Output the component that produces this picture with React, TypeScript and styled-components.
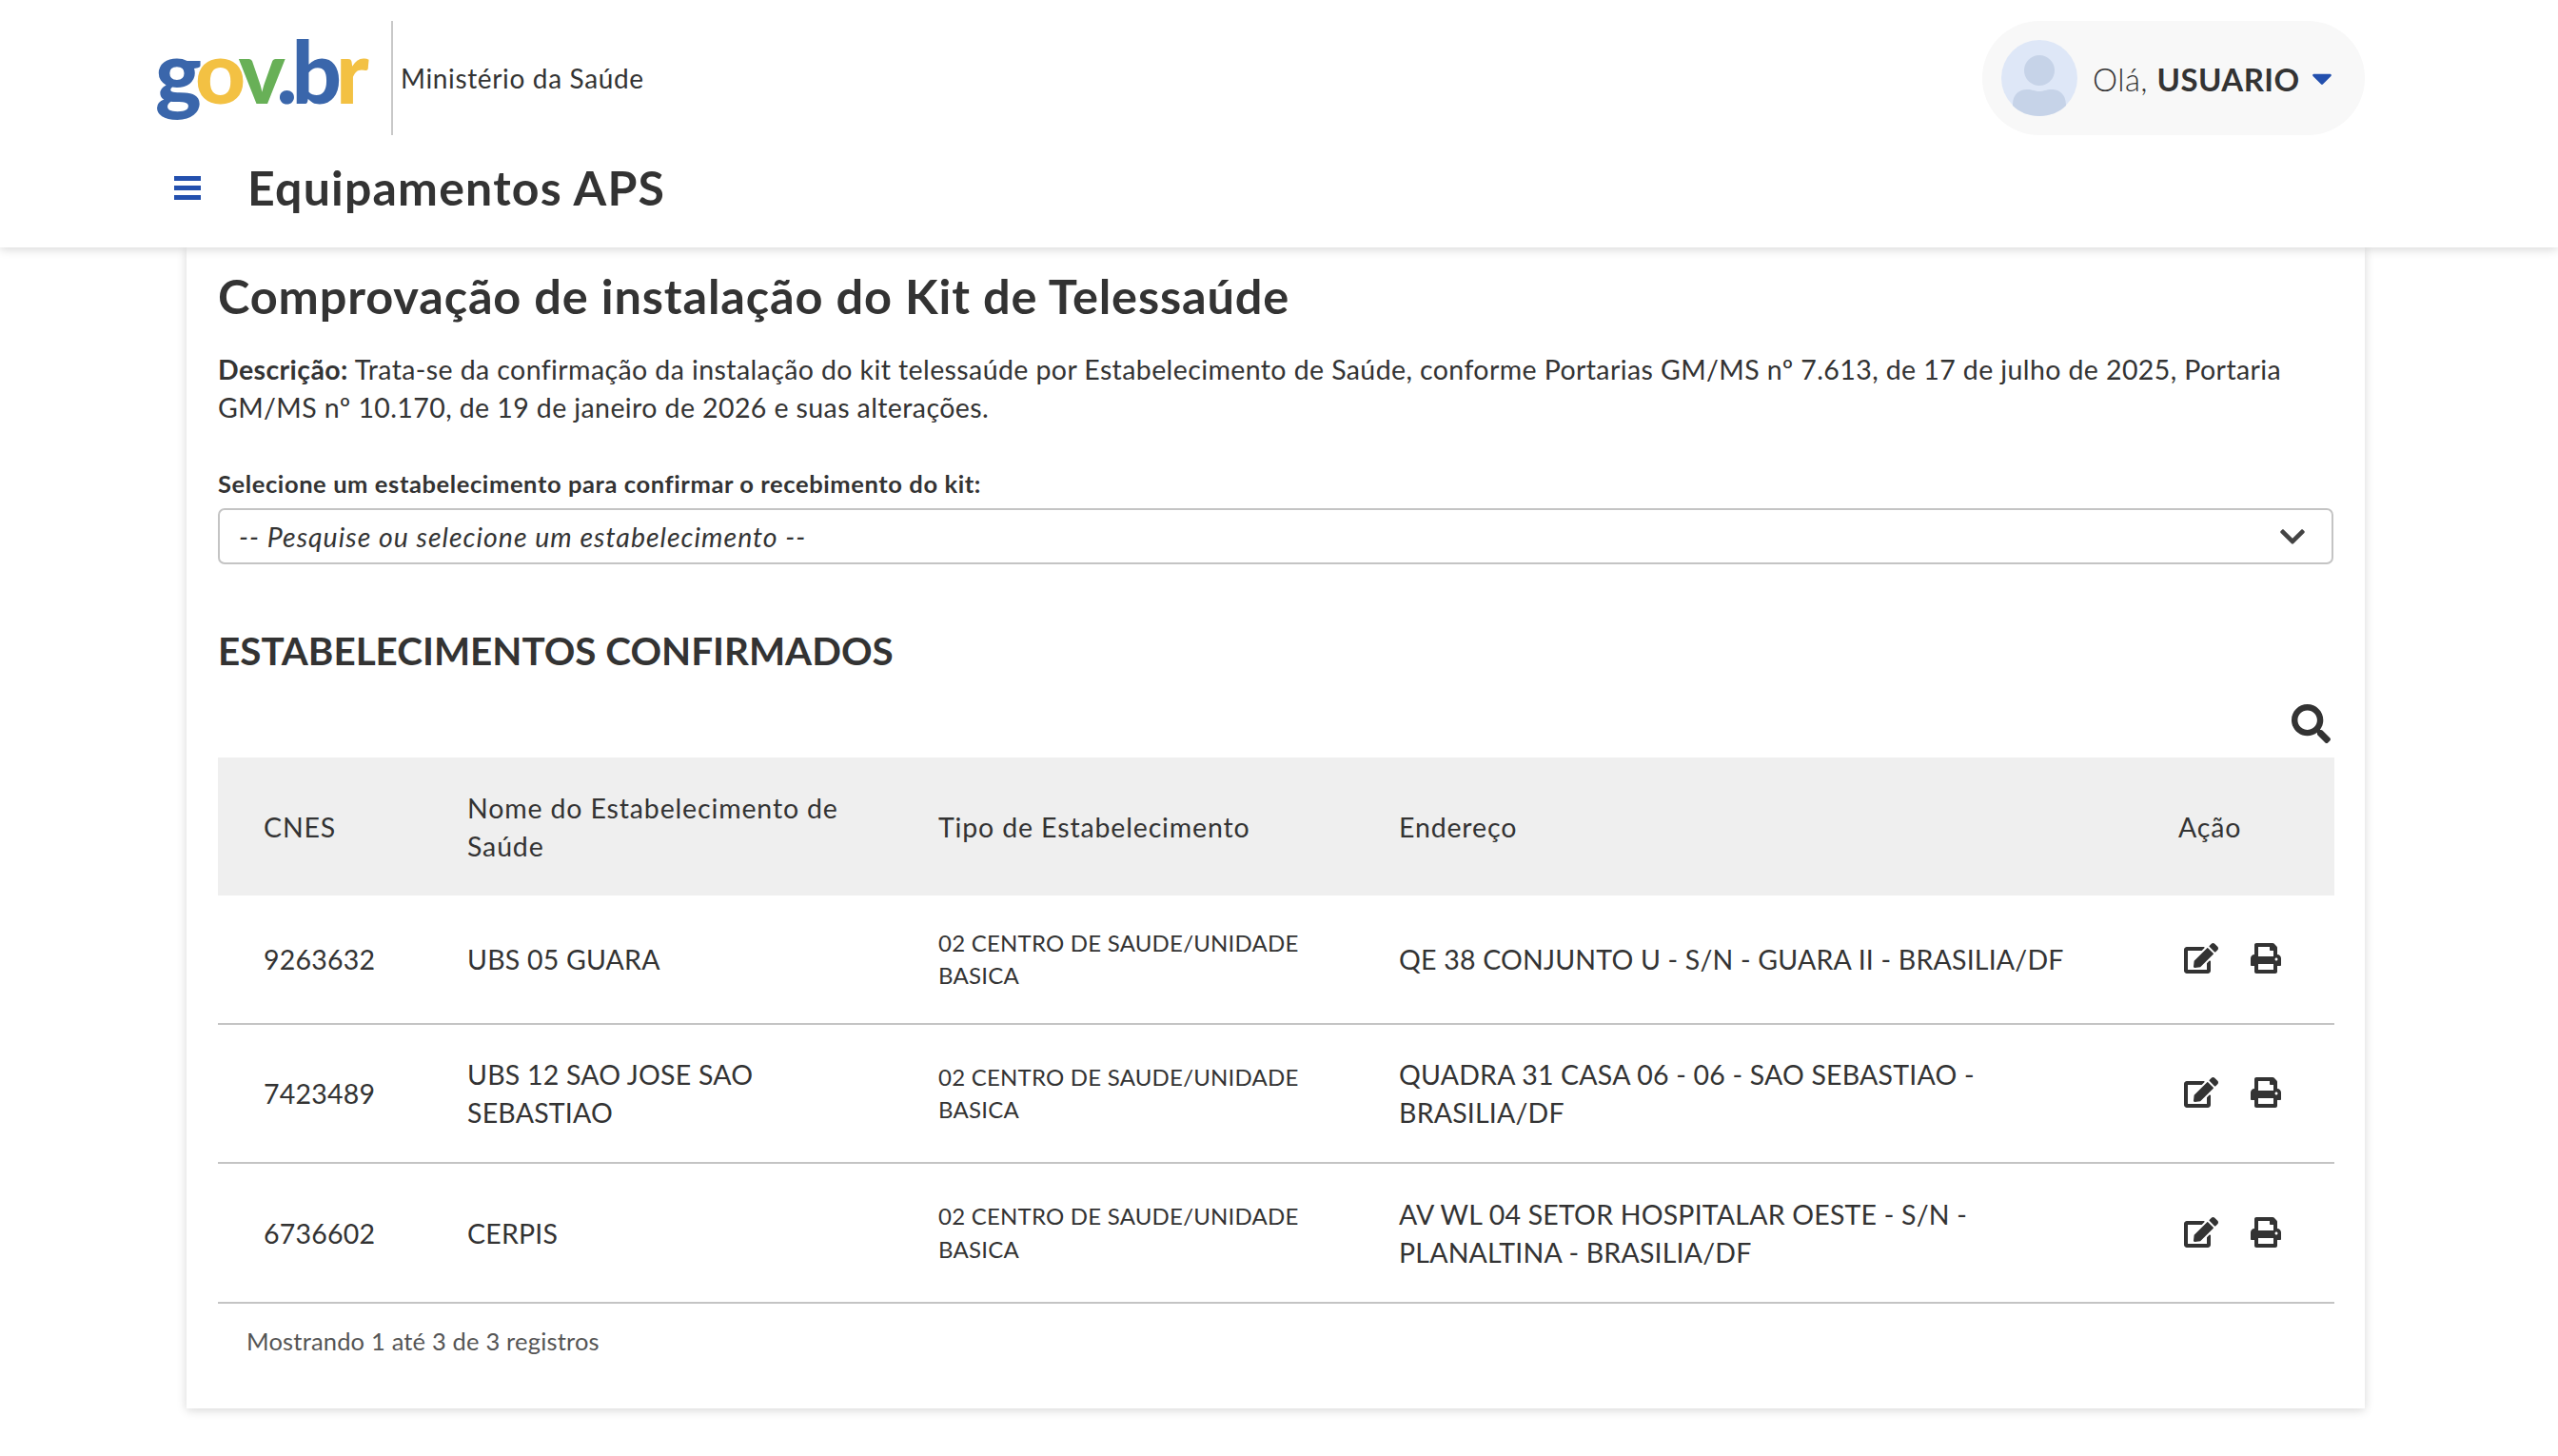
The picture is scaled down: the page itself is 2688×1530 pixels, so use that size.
import { FC } from "react";
import styled, { createGlobalStyle } from "styled-components";
import { FaEdit, FaPrint, FaSearch, FaChevronDown, FaCaretDown } from "react-icons/fa";

const rows = [
  {
    cnes: "9263632",
    nome: "UBS 05 GUARA",
    tipo: "02 CENTRO DE SAUDE/UNIDADE BASICA",
    endereco: "QE 38 CONJUNTO U - S/N - GUARA II - BRASILIA/DF",
    height: 135,
  },
  {
    cnes: "7423489",
    nome: "UBS 12 SAO JOSE SAO SEBASTIAO",
    tipo: "02 CENTRO DE SAUDE/UNIDADE BASICA",
    endereco: "QUADRA 31 CASA 06 - 06 - SAO SEBASTIAO - BRASILIA/DF",
    height: 146,
  },
  {
    cnes: "6736602",
    nome: "CERPIS",
    tipo: "02 CENTRO DE SAUDE/UNIDADE BASICA",
    endereco: "AV WL 04 SETOR HOSPITALAR OESTE - S/N - PLANALTINA - BRASILIA/DF",
    height: 147,
  },
];

const App: FC = () => {
  return (
    <>
      <GlobalStyle />
      <Header>
        <BrandRow>
          <Brand>
            <Logo>
              <LogoLetter $color="#3a66ab">g</LogoLetter>
              <LogoLetter $color="#f3c143">o</LogoLetter>
              <LogoLetter $color="#68b057">v</LogoLetter>
              <LogoLetter $color="#3a66ab">.b</LogoLetter>
              <LogoLetter $color="#f3c143">r</LogoLetter>
            </Logo>
            <BrandDivider />
            <BrandName>Ministério da Saúde</BrandName>
          </Brand>
          <UserPill>
            <Avatar viewBox="0 0 80 80">
              <circle cx="40" cy="40" r="40" fill="#dee7f7" />
              <circle cx="40" cy="32" r="16" fill="#c6d3e8" />
              <path
                d="M12 69 L12 68 C12 56 20 52 27 52 C33 52 35 54 40 54 C45 54 47 52 53 52 C60 52 68 56 68 69 C61 76 51 80 40 80 C29 80 19 76 12 69 Z"
                fill="#c6d3e8"
              />
            </Avatar>
            <UserName>
              Olá, <strong>USUARIO</strong>
            </UserName>
            <UserCaret />
          </UserPill>
        </BrandRow>
        <TitleRow>
          <MenuButton>
            <MenuBar />
            <MenuBar />
            <MenuBar />
          </MenuButton>
          <AppTitle>Equipamentos APS</AppTitle>
        </TitleRow>
      </Header>

      <Card>
        <PageTitle>Comprovação de instalação do Kit de Telessaúde</PageTitle>
        <Description>
          <strong>Descrição:</strong> Trata-se da confirmação da instalação do kit telessaúde por
          Estabelecimento de Saúde, conforme Portarias GM/MS nº 7.613, de 17 de julho de 2025,
          Portaria GM/MS nº 10.170, de 19 de janeiro de 2026 e suas alterações.
        </Description>
        <FieldLabel>Selecione um estabelecimento para confirmar o recebimento do kit:</FieldLabel>
        <SelectBox>
          <Placeholder>-- Pesquise ou selecione um estabelecimento --</Placeholder>
          <FaChevronDown />
        </SelectBox>
        <SectionTitle>ESTABELECIMENTOS CONFIRMADOS</SectionTitle>
        <SearchRow>
          <FaSearch />
        </SearchRow>
        <Table>
          <colgroup>
            <col width={262} />
            <col width={495} />
            <col width={484} />
            <col width={819} />
            <col width={164} />
          </colgroup>
          <thead>
            <tr>
              <HeadCell>CNES</HeadCell>
              <HeadCell>Nome do Estabelecimento de Saúde</HeadCell>
              <HeadCell>Tipo de Estabelecimento</HeadCell>
              <HeadCell>Endereço</HeadCell>
              <HeadCell>Ação</HeadCell>
            </tr>
          </thead>
          <tbody>
            {rows.map((row) => (
              <BodyRow key={row.cnes} $height={row.height}>
                <Cell>{row.cnes}</Cell>
                <Cell>{row.nome}</Cell>
                <SmallCell>{row.tipo}</SmallCell>
                <Cell>{row.endereco}</Cell>
                <ActionCell>
                  <Actions>
                    <EditIcon />
                    <PrintIcon />
                  </Actions>
                </ActionCell>
              </BodyRow>
            ))}
          </tbody>
        </Table>
        <TableInfo>Mostrando 1 até 3 de 3 registros</TableInfo>
      </Card>
    </>
  );
};

export default App;

const GlobalStyle = createGlobalStyle`
  html, body {
    margin: 0;
    padding: 0;
    background: #ffffff;
  }

  body {
    font-family: "Lato", "Open Sans", sans-serif;
    color: #333333;
    font-size: 28.5px;
    height: 1530px;
    overflow: hidden;
  }
`;

const Header = styled.header`
  position: relative;
  z-index: 2;
  height: 260px;
  box-sizing: border-box;
  padding: 22px 203px 0 163px;
  background: #ffffff;
  box-shadow: 0 2px 10px rgba(0, 0, 0, 0.16);
`;

const BrandRow = styled.div`
  display: flex;
  align-items: center;
  justify-content: space-between;
  height: 120px;
`;

const Brand = styled.div`
  display: flex;
  align-items: center;
`;

const Logo = styled.div`
  width: 248px;
  font-family: "Lato", sans-serif;
  font-size: 92px;
  font-weight: 900;
  letter-spacing: -6px;
  line-height: 120px;
  position: relative;
  top: -8px;
`;

const LogoLetter = styled.span<{ $color: string }>`
  color: ${(p) => p.$color};
`;

const BrandDivider = styled.div`
  width: 2px;
  height: 120px;
  background: #c8c8c8;
`;

const BrandName = styled.span`
  margin-left: 8px;
  font-size: 28px;
  letter-spacing: 0.65px;
`;

const UserPill = styled.div`
  display: flex;
  align-items: center;
  box-sizing: border-box;
  width: 402px;
  height: 120px;
  padding: 0 20px;
  border-radius: 60px;
  background: #f8f8f8;
`;

const Avatar = styled.svg`
  width: 80px;
  height: 80px;
  flex-shrink: 0;
`;

const UserName = styled.span`
  margin-left: 16px;
  font-size: 33px;
  font-weight: 300;
  letter-spacing: 0.45px;
  white-space: nowrap;
  position: relative;
  top: 1px;

  strong {
    font-weight: 700;
  }
`;

const UserCaret = styled(FaCaretDown)`
  margin-left: auto;
  margin-right: 14px;
  width: 22px;
  height: 34px;
  color: #2350ae;
`;

const TitleRow = styled.div`
  display: flex;
  align-items: center;
  height: 110px;
  padding-left: 20px;
`;

const MenuButton = styled.div`
  display: flex;
  flex-direction: column;
  gap: 5px;
  width: 28px;
`;

const MenuBar = styled.span`
  height: 5px;
  background: #2350ae;
`;

const AppTitle = styled.h1`
  margin: 0 0 0 49px;
  font-size: 50px;
  font-weight: 700;
  letter-spacing: 1.2px;
  line-height: 60px;
  color: #333333;
`;

const Card = styled.main`
  box-sizing: border-box;
  width: 2289px;
  height: 1220px;
  margin-left: 196px;
  padding: 21px 33px 0;
  background: #ffffff;
  box-shadow: 0 2px 10px rgba(0, 0, 0, 0.16);
`;

const PageTitle = styled.h2`
  margin: 0;
  font-size: 50.5px;
  font-weight: 700;
  letter-spacing: 0.85px;
  line-height: 60px;
  color: #333333;
`;

const Description = styled.p`
  margin: 27px 0 0;
  font-size: 28.5px;
  letter-spacing: 0.4px;
  line-height: 40px;
  font-weight: 400;

  strong {
    font-weight: 700;
  }
`;

const FieldLabel = styled.label`
  display: block;
  margin-top: 40px;
  font-size: 25.5px;
  font-weight: 700;
  letter-spacing: 0.6px;
  line-height: 40px;
`;

const SelectBox = styled.div`
  display: flex;
  align-items: center;
  justify-content: space-between;
  box-sizing: border-box;
  height: 59px;
  margin-top: 6px;
  padding: 0 26px 0 20px;
  border: 2px solid #c4c4c4;
  border-radius: 7px;

  svg {
    width: 30px;
    height: 30px;
    color: #444444;
  }
`;

const Placeholder = styled.span`
  font-size: 28.5px;
  font-style: italic;
  font-weight: 400;
  letter-spacing: 1px;
`;

const SectionTitle = styled.h3`
  margin: 61px 0 0;
  font-size: 40.4px;
  font-weight: 700;
  line-height: 60px;
  color: #333333;
`;

const SearchRow = styled.div`
  display: flex;
  justify-content: flex-end;
  height: 82px;
  padding: 26px 3px 0 0;
  box-sizing: border-box;

  svg {
    width: 41px;
    height: 41px;
    color: #333333;
  }
`;

const Table = styled.table`
  width: 2224px;
  table-layout: fixed;
  border-collapse: collapse;
`;

const HeadCell = styled.th`
  height: 145px;
  padding: 0 80px 0 48px;
  box-sizing: border-box;
  background: #efefef;
  font-size: 28.5px;
  font-weight: 400;
  letter-spacing: 0.85px;
  line-height: 40px;
  text-align: left;
  color: #333333;

  &:nth-child(n + 2) {
    padding-left: 0;
  }

  &:last-child {
    padding-right: 0;
  }
`;

const BodyRow = styled.tr<{ $height: number }>`
  height: ${(p) => p.$height}px;
  border-bottom: 2px solid #c4c4c4;
`;

const Cell = styled.td`
  padding: 0 80px 0 48px;
  font-size: 28.5px;
  letter-spacing: 0.2px;
  line-height: 40px;
  vertical-align: middle;

  &:nth-child(n + 2) {
    padding-left: 0;
  }
`;

const SmallCell = styled(Cell)`
  font-size: 24px;
  letter-spacing: 0.22px;
  line-height: 34.5px;
  padding-right: 100px;
`;

const ActionCell = styled(Cell)`
  padding-right: 0;
`;

const Actions = styled.div`
  display: flex;
  align-items: center;
  gap: 34px;
  padding: 0 0 2px 6px;
`;

const EditIcon = styled(FaEdit)`
  flex-shrink: 0;
  width: 36px;
  height: 32px;
  color: #333333;
`;

const PrintIcon = styled(FaPrint)`
  flex-shrink: 0;
  width: 32px;
  height: 32px;
  color: #333333;
`;

const TableInfo = styled.div`
  padding: 19px 0 0 30px;
  font-size: 25.5px;
  letter-spacing: 0.18px;
  line-height: 40px;
  color: #555555;
`;
